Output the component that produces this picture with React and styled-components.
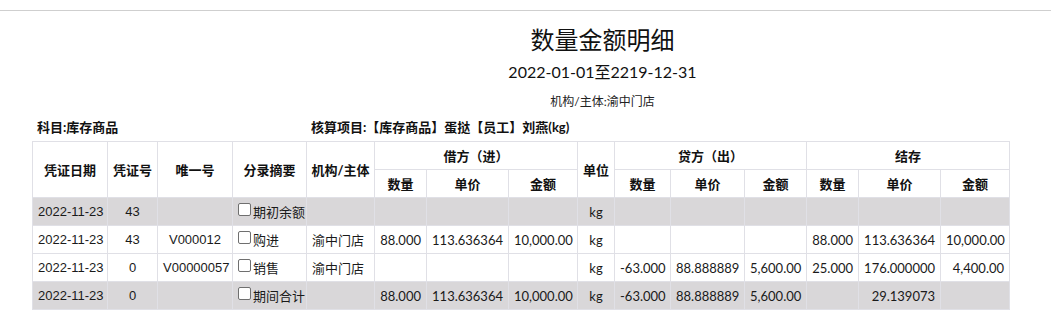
import React from "react";
import styled, { createGlobalStyle } from "styled-components";

const Global = createGlobalStyle`
  html, body { margin: 0; padding: 0; background: #fff; }
  body { font-family: Lato, "Noto Sans CJK SC", sans-serif; color: #111; }
`;

const Page = styled.div`
  padding-top: 10px;
`;

const TopRule = styled.div`
  border-top: 1px solid #cfcfcf;
`;

const Heading = styled.div`
  padding-left: 154px;
  text-align: center;
`;

const Title = styled.div`
  margin-top: 11px;
  font-size: 24px;
  line-height: 36px;
  color: #111;
`;

const DateRange = styled.div`
  margin-top: 2px;
  font-size: 16px;
  line-height: 24px;
`;

const Org = styled.div`
  margin-top: 9px;
  font-size: 12px;
  line-height: 18px;
  color: #222;
`;

const InfoBar = styled.div`
  display: flex;
  margin: 7px 0 5px 32px;
  font-size: 13px;
  line-height: 18px;
  font-weight: 700;
`;

const InfoItem = styled.div`
  width: ${(p) => (p.$w ? `${p.$w}px` : "auto")};
  padding-left: 5px;
  box-sizing: border-box;
`;

const Table = styled.table`
  margin-left: 32px;
  width: 977px;
  border-collapse: collapse;
  table-layout: fixed;
  font-size: 13px;
`;

const Th = styled.th`
  border: 1px solid #e0e0e6;
  height: 27px;
  padding: 0;
  font-weight: 700;
  text-align: center;
  color: #111;
`;

const Tr = styled.tr`
  background: ${(p) => (p.$gray ? "#d9d7d9" : "#fff")};
`;

const Td = styled.td`
  border: 1px solid #e0e0e6;
  height: 27px;
  padding: 0 5px;
  white-space: nowrap;
  overflow: hidden;
  text-align: ${(p) => p.$align || "center"};
  font-family: ${(p) =>
    p.$arial
      ? `"Liberation Sans", "Noto Sans CJK SC", sans-serif`
      : `Lato, "Noto Sans CJK SC", sans-serif`};
  color: #1a1a1a;
`;

const Check = styled.span`
  display: inline-block;
  width: 11px;
  height: 11px;
  border: 1px solid #6f6f6f;
  border-radius: 2px;
  background: #fff;
  vertical-align: -1px;
  margin-right: 2px;
  position: relative;
  top: -2px;
`;

const Summary = styled.span`
  font-family: "Noto Sans CJK SC", sans-serif;
`;

const widths = [75, 50, 75, 74, 68, 52, 82, 69, 37, 56, 74, 62, 52, 82, 69];

const rows = [
  { gray: true, d: "2022-11-23", no: "43", id: "", s: "期初余额", org: "", dq: "", dp: "", da: "", u: "kg", cq: "", cp: "", ca: "", bq: "", bp: "", ba: "" },
  { d: "2022-11-23", no: "43", id: "V000012", s: "购进", org: "渝中门店", dq: "88.000", dp: "113.636364", da: "10,000.00", u: "kg", cq: "", cp: "", ca: "", bq: "88.000", bp: "113.636364", ba: "10,000.00" },
  { d: "2022-11-23", no: "0", id: "V00000057", s: "销售", org: "渝中门店", dq: "", dp: "", da: "", u: "kg", cq: "-63.000", cp: "88.888889", ca: "5,600.00", bq: "25.000", bp: "176.000000", ba: "4,400.00" },
  { gray: true, d: "2022-11-23", no: "0", id: "", s: "期间合计", org: "", dq: "88.000", dp: "113.636364", da: "10,000.00", u: "kg", cq: "-63.000", cp: "88.888889", ca: "5,600.00", bq: "", bp: "29.139073", ba: "" },
];

export default function App() {
  return (
    <Page>
      <Global />
      <TopRule />
      <Heading>
        <Title>数量金额明细</Title>
        <DateRange>2022-01-01至2219-12-31</DateRange>
        <Org>机构/主体:渝中门店</Org>
      </Heading>
      <InfoBar>
        <InfoItem $w={274}>科目:库存商品</InfoItem>
        <InfoItem>核算项目:【库存商品】蛋挞【员工】刘燕(kg)</InfoItem>
      </InfoBar>
      <Table>
        <colgroup>
          {widths.map((w, i) => (
            <col key={i} style={{ width: w }} />
          ))}
        </colgroup>
        <thead>
          <tr>
            <Th rowSpan={2}>凭证日期</Th>
            <Th rowSpan={2}>凭证号</Th>
            <Th rowSpan={2}>唯一号</Th>
            <Th rowSpan={2}>分录摘要</Th>
            <Th rowSpan={2}>机构/主体</Th>
            <Th colSpan={3}>借方（进）</Th>
            <Th rowSpan={2}>单位</Th>
            <Th colSpan={3}>贷方（出）</Th>
            <Th colSpan={3}>结存</Th>
          </tr>
          <tr>
            <Th>数量</Th>
            <Th>单价</Th>
            <Th>金额</Th>
            <Th>数量</Th>
            <Th>单价</Th>
            <Th>金额</Th>
            <Th>数量</Th>
            <Th>单价</Th>
            <Th>金额</Th>
          </tr>
        </thead>
        <tbody>
          {rows.map((r, i) => (
            <Tr key={i} $gray={r.gray}>
              <Td $arial>{r.d}</Td>
              <Td $arial>{r.no}</Td>
              <Td $arial>{r.id}</Td>
              <Td $align="left">
                <Check />
                <Summary>{r.s}</Summary>
              </Td>
              <Td $align="left">{r.org}</Td>
              <Td $align="right">{r.dq}</Td>
              <Td $align="right">{r.dp}</Td>
              <Td $align="right">{r.da}</Td>
              <Td>{r.u}</Td>
              <Td $align="right">{r.cq}</Td>
              <Td $align="right">{r.cp}</Td>
              <Td $align="right">{r.ca}</Td>
              <Td $align="right">{r.bq}</Td>
              <Td $align="right">{r.bp}</Td>
              <Td $align="right">{r.ba}</Td>
            </Tr>
          ))}
        </tbody>
      </Table>
    </Page>
  );
}
